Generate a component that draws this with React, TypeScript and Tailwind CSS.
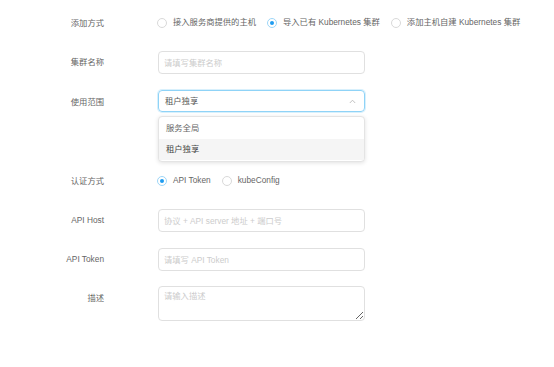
import React from "react";

const font = { fontFamily: '"Liberation Sans", "Noto Sans CJK SC", sans-serif' };

function Radio({ checked, label }: { checked?: boolean; label: string }) {
  return (
    <div className="flex items-center">
      {checked ? (
        <span className="w-[10px] h-[10px] rounded-full border border-[#9dd6f8] flex items-center justify-center">
          <span className="w-[4px] h-[4px] rounded-full bg-[#1f9cf0]" />
        </span>
      ) : (
        <span className="w-[10px] h-[10px] rounded-full border border-[#d9d9d9] bg-white" />
      )}
      <span className="ml-[6px] text-[8.3px] text-[#666]">{label}</span>
    </div>
  );
}

function Label({ children }: { children: React.ReactNode }) {
  return (
    <div className="w-[104px] shrink-0 text-right text-[8.3px] leading-[22px] text-[#666] pt-[1px]">{children}</div>
  );
}

function Input({ placeholder }: { placeholder: string }) {
  return (
    <input
      className="w-[207px] h-[23px] border border-[#e0e0e0] rounded-[4px] px-[5px] text-[8.3px] text-[#666] placeholder:text-[#ccc] outline-none bg-white"
      style={font}
      placeholder={placeholder}
    />
  );
}

export default function App() {
  return (
    <div className="w-[554px] h-[367px] bg-white pt-[11px]" style={font}>
      <div className="flex items-center h-[22px]">
        <Label>添加方式</Label>
        <div className="ml-[53px] flex items-center gap-[11px] pt-[1px]">
          <Radio label="接入服务商提供的主机" />
          <Radio checked label="导入已有 Kubernetes 集群" />
          <Radio label="添加主机自建 Kubernetes 集群" />
        </div>
      </div>

      <div className="flex items-center h-[23px] mt-[17px]">
        <Label>集群名称</Label>
        <div className="ml-[54px]">
          <Input placeholder="请填写集群名称" />
        </div>
      </div>

      <div className="flex items-start mt-[17px]">
        <Label>使用范围</Label>
        <div className="ml-[54px] flex flex-col">
          <div className="w-[207px] h-[22px] border border-[#8fd3f7] rounded-[4px] px-[6px] flex items-center justify-between shadow-[0_0_0_1px_rgba(143,211,247,0.35)]">
            <span className="text-[8.3px] text-[#555]">租户独享</span>
            <svg width="7" height="5" viewBox="0 0 7 5" className="mr-[2px]">
              <path d="M0.8 4 L3.5 1.2 L6.2 4" fill="none" stroke="#bbb" strokeWidth="0.9" />
            </svg>
          </div>
          <div className="mt-[4px] w-[207px] h-[46px] border border-[#e4e4e4] rounded-[4px] shadow-[0_1px_4px_rgba(0,0,0,0.12)] bg-white overflow-hidden flex flex-col py-[1px]">
            <div className="h-[22px] flex items-center px-[7px] text-[8.3px] text-[#666]">服务全局</div>
            <div className="h-[22px] flex items-center px-[7px] text-[8.3px] text-[#444] bg-[#f5f5f5]">租户独享</div>
          </div>
        </div>
      </div>

      <div className="flex items-center h-[22px] mt-[7px]">
        <Label>认证方式</Label>
        <div className="ml-[53px] flex items-center gap-[11px] pt-[1px]">
          <Radio checked label="API Token" />
          <Radio label="kubeConfig" />
        </div>
      </div>

      <div className="flex items-center h-[23px] mt-[17px]">
        <Label>API Host</Label>
        <div className="ml-[54px]">
          <Input placeholder="协议 + API server 地址 + 端口号" />
        </div>
      </div>

      <div className="flex items-center h-[23px] mt-[16px]">
        <Label>API Token</Label>
        <div className="ml-[54px]">
          <Input placeholder="请填写 API Token" />
        </div>
      </div>

      <div className="flex items-start mt-[16px]">
        <Label>描述</Label>
        <div className="ml-[54px]">
          <textarea
            className="block w-[207px] h-[35px] border border-[#e0e0e0] rounded-[4px] px-[5px] py-[3px] text-[8.3px] text-[#666] placeholder:text-[#ccc] outline-none resize-y"
            style={font}
            placeholder="请输入描述"
          />
        </div>
      </div>
    </div>
  );
}
